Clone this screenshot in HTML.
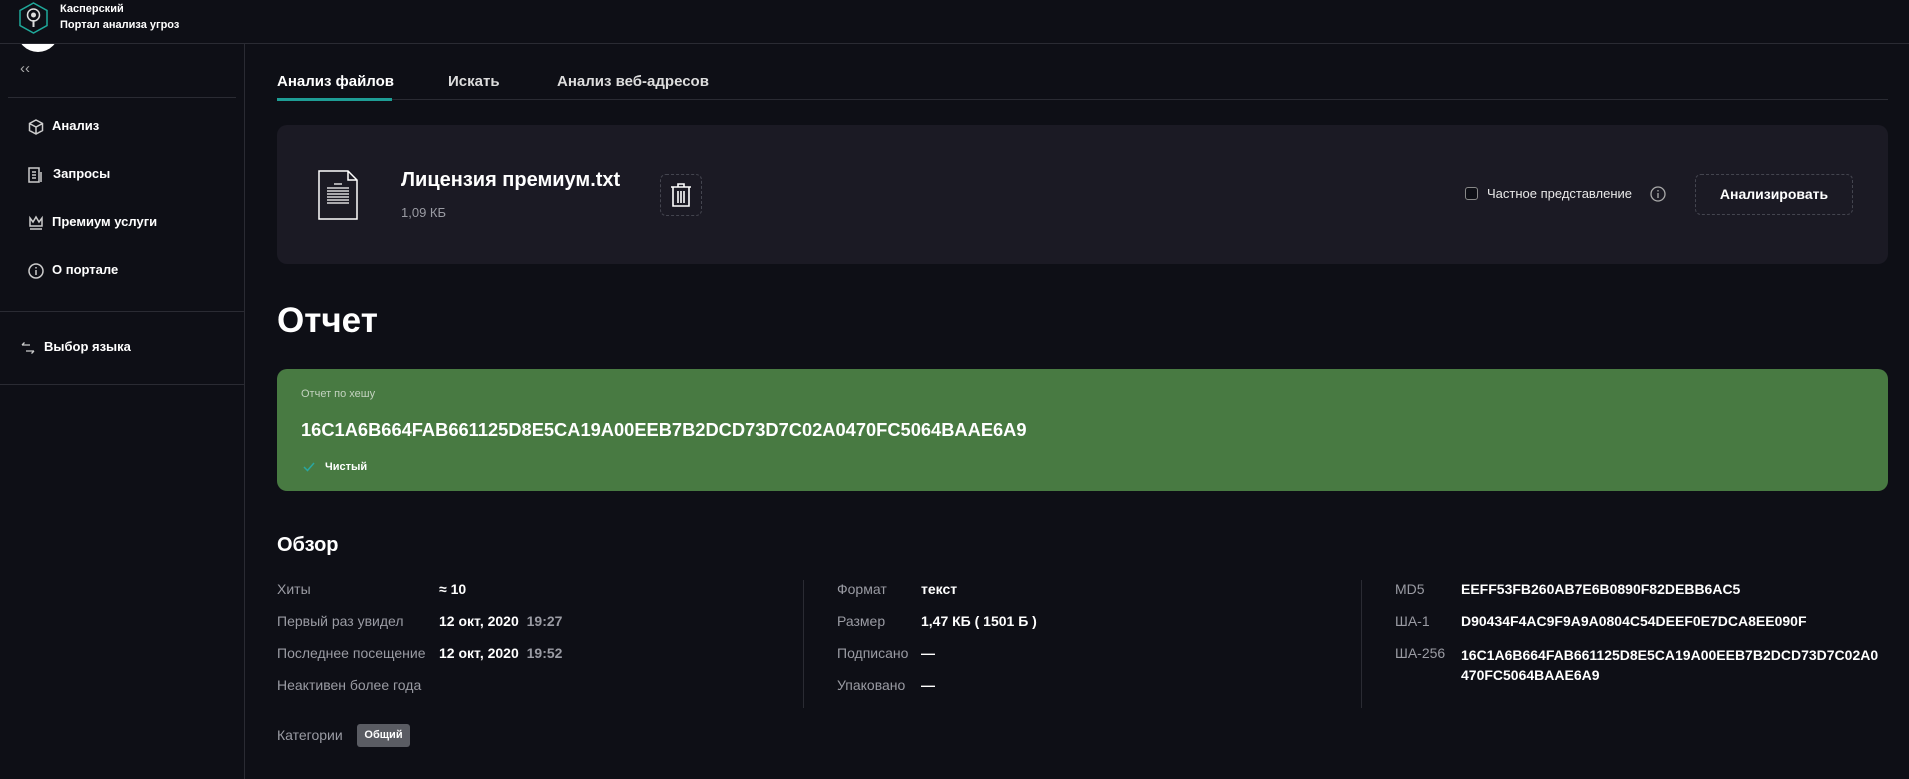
<!DOCTYPE html>
<html><head><meta charset="utf-8"><style>
*{margin:0;padding:0;box-sizing:border-box}
body{width:1909px;height:779px;overflow:hidden;background:#0e0f16;font-family:"Liberation Sans","Noto Sans CJK SC",sans-serif;color:#fff;position:relative}
.a{position:absolute;white-space:nowrap}
.b{font-weight:bold}
.g{color:#9a9ba3}
.lbl{font-size:14px;color:#9a9ba3}
.val{font-size:14px;font-weight:bold;color:#fff}
</style></head><body>
<div class="a" style="left:0;top:0;width:1909px;height:44px;border-bottom:1px solid #2a2b33;background:#0e0f16"></div>
<svg class="a" style="left:18px;top:2px" width="31" height="32" viewBox="0 0 31 32"><polygon points="15.5,1 29,8.5 29,23.5 15.5,31 2,23.5 2,8.5" fill="none" stroke="#1fa89a" stroke-width="1.5"/><circle cx="15.5" cy="13" r="6" fill="none" stroke="#ddd" stroke-width="1.5"/><rect x="14.5" y="18" width="2" height="7" fill="#ddd"/><circle cx="15.5" cy="13" r="2.5" fill="#ddd"/></svg>
<div class="a b" style="left:60px;top:2px;font-size:11px;line-height:14px">Касперский</div>
<div class="a b" style="left:60px;top:18px;font-size:11px;line-height:14px">Портал анализа угроз</div>
<div class="a" style="left:244px;top:44px;width:1px;height:735px;background:#2a2b33"></div>
<div class="a" style="left:17px;top:20px;width:42px;height:32px;border-radius:0 0 21px 21px;background:#fff;clip-path:inset(24px 0 0 0)"></div>
<div class="a" style="left:20px;top:60px;font-size:15px;color:#aaa">‹‹</div>
<div class="a" style="left:8px;top:97px;width:228px;height:1px;background:#2a2b33"></div>
<svg class="a" style="left:28px;top:119px" width="16" height="16" viewBox="0 0 16 16" fill="none" stroke="#ccc" stroke-width="1.5"><path d="M8 1L14.5 4.5V11.5L8 15L1.5 11.5V4.5Z M1.5 4.5L8 8L14.5 4.5 M8 8V15"/></svg>
<div class="a b" style="left:52px;top:118px;font-size:13px">Анализ</div>
<svg class="a" style="left:28px;top:167px" width="16" height="16" viewBox="0 0 16 16" fill="none" stroke="#ccc" stroke-width="1.5"><path d="M1 1H11V15H1Z M4 5H8 M4 8H8 M4 11H8 M13 5V15"/></svg>
<div class="a b" style="left:53px;top:166px;font-size:13px">Запросы</div>
<svg class="a" style="left:28px;top:215px" width="16" height="16" viewBox="0 0 16 16" fill="none" stroke="#ccc" stroke-width="1.5"><path d="M2 3L5 7L8 2L11 7L14 3V11H2Z M2 14H14"/></svg>
<div class="a b" style="left:52px;top:214px;font-size:13px">Премиум услуги</div>
<svg class="a" style="left:28px;top:263px" width="16" height="16" viewBox="0 0 16 16" fill="none" stroke="#ccc" stroke-width="1.5"><circle cx="8" cy="8" r="7"/><path d="M8 7V12 M8 4V5.5"/></svg>
<div class="a b" style="left:52px;top:262px;font-size:13px">О портале</div>
<div class="a" style="left:0;top:311px;width:244px;height:1px;background:#2a2b33"></div>
<svg class="a" style="left:21px;top:341px" width="14" height="14" viewBox="0 0 14 14" fill="none" stroke="#ccc" stroke-width="1.3"><path d="M1 4H9 M1 4L3.5 1.5 M13 10H5 M13 10L10.5 12.5"/></svg>
<div class="a b" style="left:44px;top:339px;font-size:13px">Выбор языка</div>
<div class="a" style="left:0;top:384px;width:244px;height:1px;background:#2a2b33"></div>
<div class="a" style="left:277px;top:99px;width:1611px;height:1px;background:#2a2b33"></div>
<div class="a" style="left:277px;top:98px;width:115px;height:3px;background:#1e9d95"></div>
<div class="a b" style="left:277px;top:73px;font-size:15px">Анализ файлов</div>
<div class="a b" style="left:448px;top:73px;font-size:15px;color:#ddd">Искать</div>
<div class="a b" style="left:557px;top:73px;font-size:15px;color:#ddd">Анализ веб-адресов</div>
<div class="a" style="left:277px;top:125px;width:1611px;height:139px;background:#1b1a24;border-radius:10px"></div>
<svg class="a" style="left:318px;top:170px" width="40" height="50" viewBox="0 0 40 50" fill="none" stroke="#fff" stroke-width="1.5"><path d="M1 1H30L39 10V49H1Z M30 1V10H39"/><path d="M16 14H24 M9 18H31 M9 21H31 M9 24H31 M9 27H31 M9 30H31 M9 33H31" stroke-width="1.3"/></svg>
<div class="a b" style="left:401px;top:169px;font-size:20px">Лицензия премиум.txt</div>
<div class="a g" style="left:401px;top:205px;font-size:13px">1,09 КБ</div>
<div class="a" style="left:660px;top:174px;width:42px;height:42px;border:1px dashed #44454f;border-radius:6px"></div>
<svg class="a" style="left:669px;top:182px" width="24" height="26" viewBox="0 0 24 26" fill="none" stroke="#fff" stroke-width="1.6"><path d="M2 5H22 M9 5V2H15V5 M4 5V24H20V5 M9 9V21 M12 9V21 M15 9V21"/></svg>
<div class="a" style="left:1465px;top:187px;width:13px;height:13px;border:1px solid #888;border-radius:3px;background:#0e0f16"></div>
<div class="a" style="left:1487px;top:186px;font-size:13px;color:#e8e8e8">Частное представление</div>
<svg class="a" style="left:1650px;top:186px" width="16" height="16" viewBox="0 0 16 16" fill="none" stroke="#aaa" stroke-width="1.3"><circle cx="8" cy="8" r="7"/><path d="M8 7V12 M8 4V5.5"/></svg>
<div class="a" style="left:1695px;top:174px;width:158px;height:41px;border:1px dashed #44454f;border-radius:6px"></div>
<div class="a b" style="left:1695px;top:186px;width:158px;text-align:center;font-size:14px">Анализировать</div>
<div class="a b" style="left:277px;top:301px;font-size:35px">Отчет</div>
<div class="a" style="left:277px;top:369px;width:1611px;height:122px;background:#487a42;border-radius:10px"></div>
<div class="a" style="left:301px;top:388px;font-size:11px;color:#c3d2bf">Отчет по хешу</div>
<div class="a b" style="left:301px;top:419px;font-size:18.3px">16C1A6B664FAB661125D8E5CA19A00EEB7B2DCD73D7C02A0470FC5064BAAE6A9</div>
<svg class="a" style="left:303px;top:462px" width="12" height="10" viewBox="0 0 12 10" fill="none" stroke="#2aa7a0" stroke-width="1.5"><path d="M1 5L4.5 8.5L11 1"/></svg>
<div class="a b" style="left:325px;top:461px;font-size:11px">Чистый</div>
<div class="a b" style="left:277px;top:534px;font-size:20px">Обзор</div>
<div class="a lbl" style="left:277px;top:581px">Хиты</div><div class="a val" style="left:439px;top:581px">≈ 10</div>
<div class="a lbl" style="left:277px;top:613px">Первый раз увидел</div><div class="a val" style="left:439px;top:613px">12 окт, 2020 <span style="color:#9a9ba3;margin-left:4px">19:27</span></div>
<div class="a lbl" style="left:277px;top:645px">Последнее посещение</div><div class="a val" style="left:439px;top:645px">12 окт, 2020 <span style="color:#9a9ba3;margin-left:4px">19:52</span></div>
<div class="a lbl" style="left:277px;top:677px">Неактивен более года</div>
<div class="a lbl" style="left:277px;top:727px">Категории</div>
<div class="a" style="left:357px;top:724px;width:53px;height:23px;background:#5a5c63;border-radius:3px;font-size:11px;font-weight:bold;text-align:center;line-height:23px">Общий</div>
<div class="a" style="left:803px;top:580px;width:1px;height:128px;background:#2a2b33"></div>
<div class="a lbl" style="left:837px;top:581px">Формат</div><div class="a val" style="left:921px;top:581px">текст</div>
<div class="a lbl" style="left:837px;top:613px">Размер</div><div class="a val" style="left:921px;top:613px">1,47 КБ ( 1501 Б )</div>
<div class="a lbl" style="left:837px;top:645px">Подписано</div><div class="a val" style="left:921px;top:645px">—</div>
<div class="a lbl" style="left:837px;top:677px">Упаковано</div><div class="a val" style="left:921px;top:677px">—</div>
<div class="a" style="left:1361px;top:580px;width:1px;height:128px;background:#2a2b33"></div>
<div class="a lbl" style="left:1395px;top:581px">MD5</div><div class="a val" style="left:1461px;top:581px">EEFF53FB260AB7E6B0890F82DEBB6AC5</div>
<div class="a lbl" style="left:1395px;top:613px">ША-1</div><div class="a val" style="left:1461px;top:613px">D90434F4AC9F9A9A0804C54DEEF0E7DCA8EE090F</div>
<div class="a lbl" style="left:1395px;top:645px">ША-256</div><div class="a val" style="left:1461px;top:645px;line-height:20px">16C1A6B664FAB661125D8E5CA19A00EEB7B2DCD73D7C02A0<br>470FC5064BAAE6A9</div>
</body></html>
